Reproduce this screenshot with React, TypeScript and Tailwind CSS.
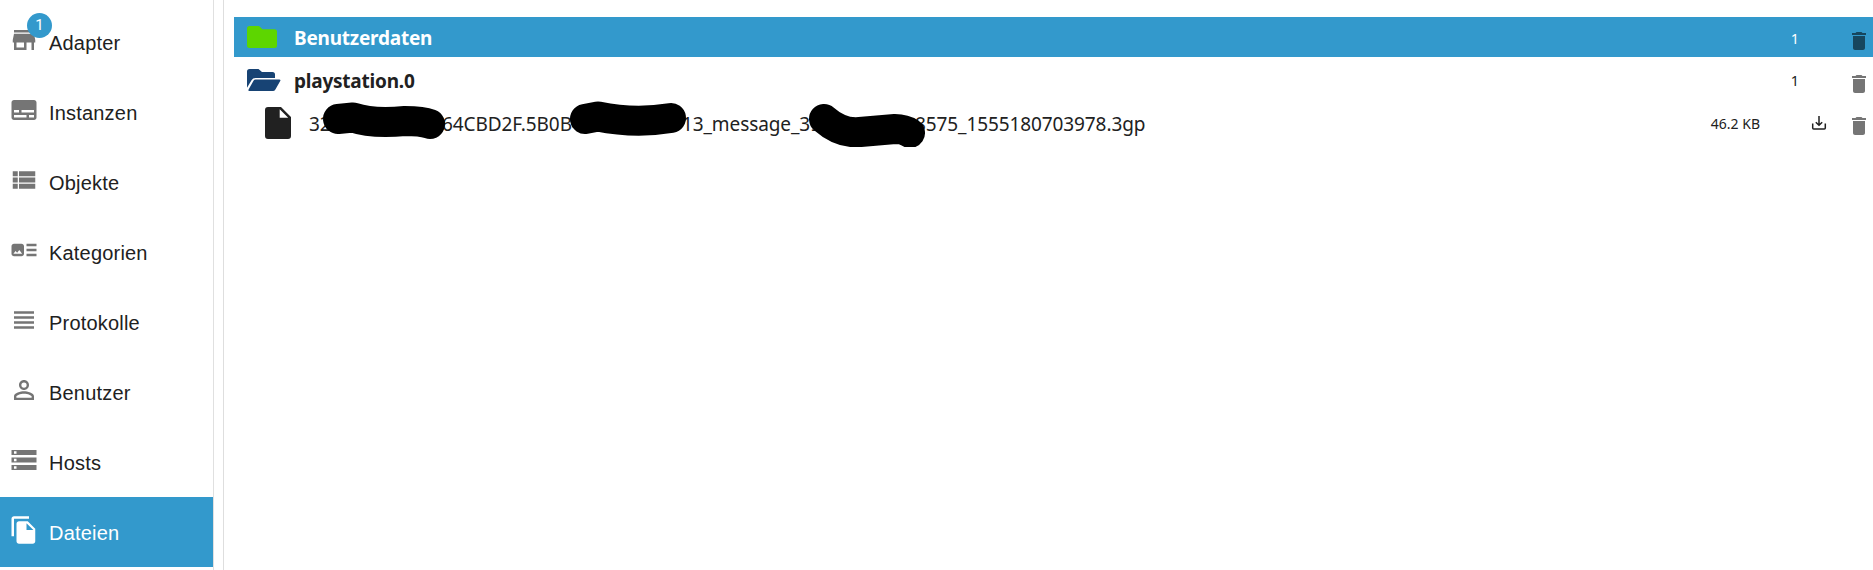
import type { ReactNode } from "react";

type NavItem = { label: string; path: string; badge?: number; active?: boolean };

const NAV: NavItem[] = [
  { label: "Adapter", badge: 1, path: "M20 4H4v2h16V4zm1 10v-2l-1-5H4l-1 5v2h1v6h10v-6h4v6h2v-6h1zm-9 4H6v-4h6v4z" },
  { label: "Instanzen", path: "M20 4H4c-1.1 0-2 .9-2 2v12c0 1.1.9 2 2 2h16c1.1 0 2-.9 2-2V6c0-1.1-.9-2-2-2zM4 12h4v2H4v-2zm10 6H4v-2h10v2zm6 0h-4v-2h4v2zm0-4H10v-2h10v2z" },
  { label: "Objekte", path: "M3 14h4v-4H3v4zm0 5h4v-4H3v4zM3 9h4V5H3v4zm5 5h13v-4H8v4zm0 5h13v-4H8v4zM8 5v4h13V5H8z" },
  { label: "Kategorien", path: "M22 13h-8v-2h8v2zm0-6h-8v2h8V7zm-8 10h8v-2h-8v2zm-2-8v6c0 1.1-.9 2-2 2H4c-1.1 0-2-.9-2-2V9c0-1.1.9-2 2-2h6c1.1 0 2 .9 2 2zm-1.5 6l-2.25-3-1.75 2.26-1.25-1.51L3.5 15h7z" },
  { label: "Protokolle", path: "M4 15h16v-2H4v2zm0 4h16v-2H4v2zm0-8h16V9H4v2zm0-6v2h16V5H4z" },
  { label: "Benutzer", path: "M12 5.9a2.1 2.1 0 1 1 0 4.2 2.1 2.1 0 0 1 0-4.2m0 9c2.97 0 6.1 1.46 6.1 2.1v1.1H5.9V17c0-.64 3.13-2.1 6.1-2.1M12 4C9.79 4 8 5.79 8 8s1.79 4 4 4 4-1.79 4-4-1.79-4-4-4zm0 9c-2.67 0-8 1.34-8 4v3h16v-3c0-2.66-5.33-4-8-4z" },
  { label: "Hosts", path: "M2 20h20v-4H2v4zm2-3h2v2H4v-2zM2 4v4h20V4H2zm4 3H4V5h2v2zm-4 7h20v-4H2v4zm2-3h2v2H4v-2z" },
  { label: "Dateien", active: true, path: "M16 1H4c-1.1 0-2 .9-2 2v14h2V3h12V1zm-1 4l6 6v10c0 1.1-.9 2-2 2H7.99C6.89 23 6 22.1 6 21V7c0-1.1.89-2 1.99-2h7zm-1 7h5.5L14 6.5V12z" },
];

function NavRow({ item }: { item: NavItem }) {
  return (
    <a className={item.active ? "flex h-[70px] items-center bg-[#3399cc] pl-[9px] text-white" : "flex h-[70px] items-center pl-[9px] text-[#212121]"}>
      <span className={item.active ? "relative mb-1 text-white" : "relative mb-1 text-[#757575]"}>
        <svg viewBox="0 0 24 24" className="size-[30px]" fill="currentColor">
          <path d={item.path} />
        </svg>
        {item.badge && (
          <span className="absolute top-[-12px] left-[18px] flex size-[25px] items-center justify-center rounded-full bg-[#3399cc] font-[Roboto] text-[15px] text-white">
            {item.badge}
          </span>
        )}
      </span>
      <span className="ml-[10px] pt-px text-[20px] leading-[30px] tracking-[0.19px]">{item.label}</span>
    </a>
  );
}

function Trash() {
  return (
    <svg viewBox="0 0 24 24" className="mt-[5px] mr-0.5 size-6 shrink-0 fill-black/54">
      <path d="M6 19c0 1.1.9 2 2 2h8c1.1 0 2-.9 2-2V7H6v12zM19 4h-3.500l-1-1h-5l-1 1H5v2h14V4z" />
    </svg>
  );
}

function Download() {
  return (
    <svg viewBox="0 0 16 16" className="mr-[20px] size-4 shrink-0" fill="none" stroke="#212121" strokeWidth="1.5">
      <path d="M8 1v9M4.800 7.200L8 10.300l3.200-3.100M1.700 8.500v4.500q0 1 1 1h10.600q1 0 1-1V8.500" />
    </svg>
  );
}

function FolderRow({ name, count, selected, children }: { name: string; count: number; selected?: boolean; children: ReactNode }) {
  return (
    <div className={selected ? "flex h-10 items-center bg-[#3399cc] pt-[3px] text-white" : "flex h-[46px] items-center pt-[2px] text-[#212121]"}>
      <div className="w-[60px] shrink-0 pl-[13px]">{children}</div>
      <div className="flex-1 text-[19px] font-bold tracking-[-0.22px]">{name}</div>
      <div className="mr-[48px] text-[14.500px]">{count}</div>
      <Trash />
    </div>
  );
}

export default function App() {
  return (
    <div className="flex h-[570px] w-[1873px] overflow-hidden bg-white">
      <nav className="w-[214px] shrink-0 border-r border-[#e0e0e0] pt-[7px] font-['Liberation_Sans',sans-serif]">
        {NAV.map((item) => (
          <NavRow key={item.label} item={item} />
        ))}
      </nav>
      <main className="ml-[9px] flex-1 border-l border-[#dedede] pt-[17px] pl-[10px] font-['Noto_Sans',sans-serif]">
        <FolderRow name="Benutzerdaten" count={1} selected>
          <svg viewBox="0 0 30 22" className="mb-1 h-[22px] w-[30px]">
            <path fill="#5dd600" d="M2.500 0h9.500l3.500 3.200h12q2.500 0 2.500 2.500v13.800q0 2.500-2.500 2.500h-25Q0 22 0 19.500v-17Q0 0 2.500 0z" />
          </svg>
        </FolderRow>
        <FolderRow name="playstation.0" count={1}>
          <svg viewBox="0 0 34 22" className="mb-0.5 h-[22px] w-[34px]" fill="#174374">
            <path d="M2.500 0h9l3.500 3h10.500Q28 3 28 5.500V9H8.500Q5.800 9 4.500 11.200L0 18.800V2.500Q0 0 2.500 0z" />
            <path d="M8.500 10.500h23.700q1.800 0 1 1.600l-4.800 8.400Q27.500 22 26 22H2.500Q.7 22 1.600 20.500l4.900-8.700Q7.200 10.500 8.500 10.500z" />
          </svg>
        </FolderRow>
        <div className="relative flex h-10 items-center text-[#212121]">
          <div className="w-[75px] shrink-0 pl-[31px]">
            <svg viewBox="0 0 26 32" className="h-8 w-[26px]" fill="#212121">
              <path d="M3 0h13l10 10v19q0 3-3 3H3q-3 0-3-3V3Q0 0 3 0zM14.700 2.300v8.500h8.500z" />
            </svg>
          </div>
          <div className="flex flex-1 pt-[2px] text-[19px] tracking-[-0.1px]">
            <span className="w-[133px]">32</span>
            <span className="w-[240px]">64CBD2F.5B0B4</span>
            <span className="w-[233px]">13_message_39</span>
            <span>8575_1555180703978.3gp</span>
          </div>
          <svg viewBox="310 97 630 50" className="absolute top-[-6px] left-[76px] h-[50px] w-[630px]" fill="none" stroke="#000" strokeWidth="30" strokeLinecap="round" strokeLinejoin="round">
            <path d="M338 119L353 117.500Q372 124 405 121Q422 121 430 124" />
            <path d="M585 119L598 116.500Q635 124 671 118" />
            <path d="M824 119Q841 134 860 132L895 129Q904 129 910 133" />
          </svg>
          <div className="mr-[51px] text-[14px]">46.2 KB</div>
          <Download />
          <Trash />
        </div>
      </main>
    </div>
  );
}
